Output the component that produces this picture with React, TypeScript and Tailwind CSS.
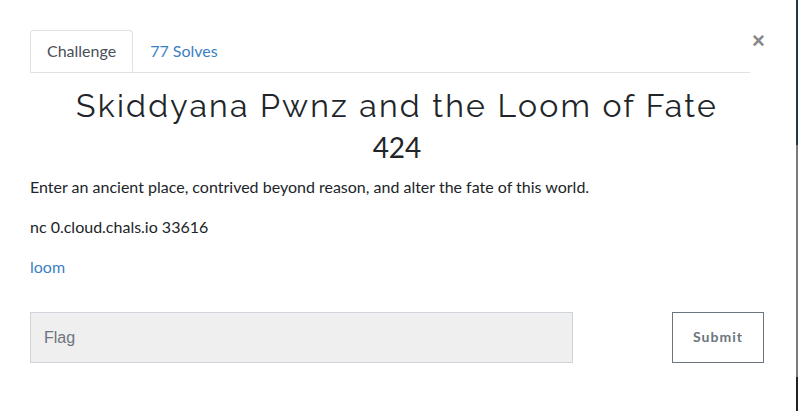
import React from "react";

export default function App() {
  return (
    <div className="flex h-[411px] w-full bg-white" style={{ fontFamily: "Lato, 'Open Sans', sans-serif" }}>
      <div className="flex-1 pl-[30px] pr-[32px] pt-[30px]">
        <div className="flex items-start">
          <ul className="flex flex-1 border-b border-[#dee2e6]">
            <li className="-mb-px rounded-t-[4px] border border-[#dee2e6] border-b-white bg-white px-[16px] h-[42px] flex items-center text-[16px] text-[#495057]">
              Challenge
            </li>
            <li className="px-[17px] h-[42px] flex items-center text-[16px] text-[#3b7fc4]">77 Solves</li>
          </ul>
          <button className="w-[14px] pl-[2px] text-[#888] text-[22px] leading-none font-bold" style={{ fontFamily: "'Liberation Sans', Arial, sans-serif" }}>
            ×
          </button>
        </div>
        <h1 className="mt-[15px] text-center text-[32px] leading-[36px] tracking-[2.2px] text-[#212529]" style={{ fontFamily: "Raleway, Lato, 'Open Sans', sans-serif" }}>
          Skiddyana Pwnz and the Loom of Fate
        </h1>
        <h2 className="mt-[7px] text-center text-[28px] leading-[32px] text-[#212529]">424</h2>
        <div className="mt-[12px] text-[16px] leading-[24px] text-[#212529]">
          <p>Enter an ancient place, contrived beyond reason, and alter the fate of this world.</p>
          <p className="mt-[16px]">nc 0.cloud.chals.io 33616</p>
          <p className="mt-[16px] text-[#3b7fc4]">loom</p>
        </div>
        <div className="mt-[33px] flex items-center justify-between">
          <div
            className="flex h-[51px] w-[543px] items-center border border-[#ced4da] bg-[#efefef] pl-[13px] text-[16px] text-[#6c757d]"
            style={{ fontFamily: "'Liberation Sans', Arial, sans-serif" }}
          >
            Flag
          </div>
          <button className="h-[51px] w-[92px] border border-[#6c757d] pb-[3px] text-[14px] font-bold tracking-[1px] text-[#6c757d]">
            Submit
          </button>
        </div>
      </div>
      <div className="flex w-[2px] flex-col">
        <div className="h-[145px] bg-[#1d3a47]" />
        <div className="h-[232px] bg-[#7a7a7a]" />
        <div className="flex-1 bg-[#222]" />
      </div>
    </div>
  );
}
